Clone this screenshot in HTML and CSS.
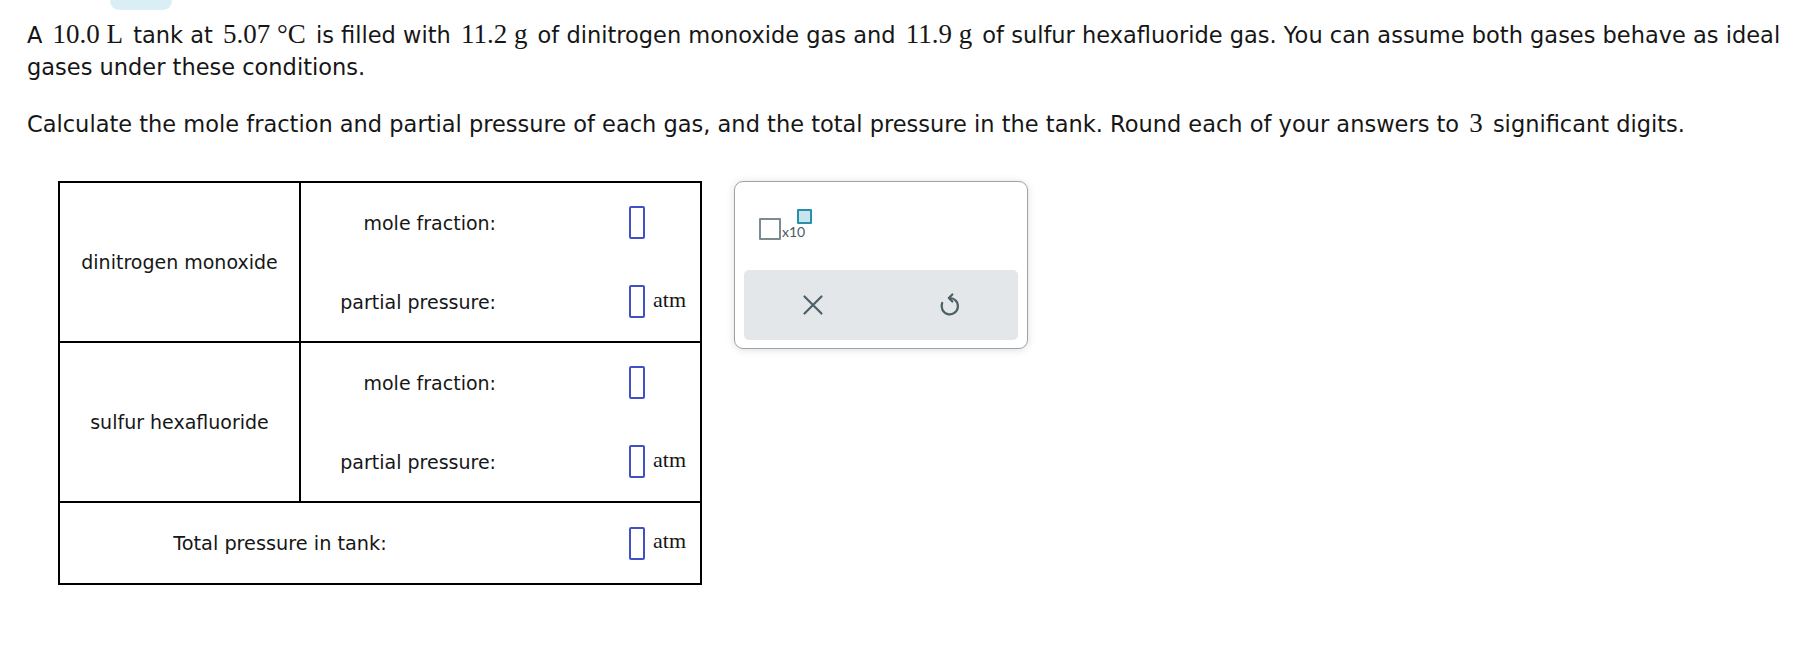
FILE: index.html
```html
<!DOCTYPE html>
<html>
<head>
<meta charset="utf-8">
<link rel="stylesheet" href="styles.css">
</head>
<body>
<div class="tab-hint"></div>
<div class="question">
  <p class="q">A <span class="m">10.0 L</span> tank at <span class="m">5.07 °C</span> is filled with <span class="m">11.2 g</span> of dinitrogen monoxide gas and <span class="m">11.9 g</span> of sulfur hexafluoride gas. You can assume both gases behave as ideal gases under these conditions.</p>
  <p class="q q2">Calculate the mole fraction and partial pressure of each gas, and the total pressure in the tank. Round each of your answers to <span class="m">3</span> significant digits.</p>
</div>
<div class="work">
  <div class="grid">
    <div class="gas">dinitrogen monoxide</div>
    <div class="fields">
      <div class="field"><span class="label">mole fraction:</span><span class="box"></span></div>
      <div class="field"><span class="label">partial pressure:</span><span class="box"></span><span class="unit">atm</span></div>
    </div>
    <div class="gas">sulfur hexafluoride</div>
    <div class="fields">
      <div class="field"><span class="label">mole fraction:</span><span class="box"></span></div>
      <div class="field"><span class="label">partial pressure:</span><span class="box"></span><span class="unit">atm</span></div>
    </div>
    <div class="total"><span class="total-label">Total pressure in tank:</span><span class="box total-box"></span><span class="unit">atm</span></div>
  </div>
  <div class="panel">
    <div class="sci">
      <span class="base"></span><span class="x10">x10</span><span class="exp"></span>
    </div>
    <div class="bar">
      <div class="btn">
        <svg width="24" height="24" viewBox="0 0 24 24"><path d="M3.5 3.5 L20.5 20.5 M20.5 3.5 L3.5 20.5" stroke="#4d5f66" stroke-width="2.2" fill="none" stroke-linecap="round"/></svg>
      </div>
      <div class="btn">
        <svg width="28" height="28" viewBox="0 0 24 24"><path d="M11.5 6 A7 7 0 1 1 5.3 10.3" stroke="#4d5f66" stroke-width="1.9" fill="none" stroke-linecap="round"/><path d="M14 3 L11 6 L14 9" stroke="#4d5f66" stroke-width="1.9" fill="none" stroke-linecap="round" stroke-linejoin="round"/></svg>
      </div>
    </div>
  </div>
</div>
</body>
</html>
```

FILE: styles.css
```css
html, body {
  margin: 0;
  padding: 0;
  background: #fff;
}
body {
  font-family: "DejaVu Sans", Verdana, sans-serif;
  color: #161616;
}
.tab-hint {
  width: 62px;
  height: 10px;
  margin-left: 110px;
  background: #d9eff5;
  border-radius: 0 0 9px 9px;
}
.question {
  padding: 9px 20px 0 27px;
}
.q {
  margin: 0;
  font-size: 22.5px;
  line-height: 32px;
}
.q2 {
  margin-top: 25px;
}
.m {
  font-family: "Liberation Serif", "Times New Roman", serif;
  font-size: 27px;
  line-height: 1;
  padding: 0 3px;
}
.work {
  display: flex;
  align-items: flex-start;
  margin-top: 41px;
  padding-left: 58px;
}
.grid {
  display: grid;
  grid-template-columns: 241px 399px;
  border: 2px solid #000;
  font-size: 19px;
}
.gas {
  box-sizing: border-box;
  height: 160px;
  border-right: 2px solid #000;
  border-bottom: 2px solid #000;
  display: flex;
  align-items: center;
  justify-content: center;
}
.fields {
  box-sizing: border-box;
  height: 160px;
  border-bottom: 2px solid #000;
  display: flex;
  flex-direction: column;
}
.field {
  flex: 1;
  display: flex;
  align-items: center;
}
.label {
  width: 195px;
  text-align: right;
}
.box {
  box-sizing: border-box;
  width: 16px;
  height: 33px;
  border: 2px solid #4150c4;
  border-radius: 2px;
  margin-left: 133px;
}
.unit {
  font-family: "Liberation Serif", "Times New Roman", serif;
  font-size: 22px;
  margin-left: 8px;
  margin-top: -4px;
}
.total {
  grid-column: 1 / -1;
  height: 80px;
  display: flex;
  align-items: center;
}
.total-label {
  width: 440px;
  text-align: center;
  font-size: 19.3px;
}
.total-box {
  margin-left: 129px;
}
.panel {
  box-sizing: border-box;
  width: 294px;
  height: 168px;
  margin-left: 32px;
  margin-top: 0;
  border: 1px solid #9ca2a5;
  border-radius: 9px;
  box-shadow: 0 1px 8px rgba(0, 0, 0, 0.13);
  padding: 27px 9px 8px 9px;
  display: flex;
  flex-direction: column;
}
.sci {
  display: flex;
  align-items: flex-end;
  height: 31px;
  padding-left: 15px;
}
.base {
  box-sizing: border-box;
  width: 22px;
  height: 22px;
  border: 2px solid #7b8b8f;
  border-radius: 1px;
}
.x10 {
  font-family: Lato, "Open Sans", sans-serif;
  font-size: 14px;
  line-height: 14px;
  color: #4a5a61;
  margin-left: 1px;
  margin-bottom: 1px;
}
.exp {
  box-sizing: border-box;
  align-self: flex-start;
  width: 15px;
  height: 15px;
  border: 2px solid #2a90aa;
  background: #c6e5ef;
  border-radius: 1px;
  margin-left: -8px;
}
.bar {
  margin-top: 30px;
  height: 70px;
  background: #e3e7ea;
  border-radius: 5px;
  display: grid;
  grid-template-columns: 1fr 1fr;
}
.btn {
  display: flex;
  align-items: center;
  justify-content: center;
}
```
